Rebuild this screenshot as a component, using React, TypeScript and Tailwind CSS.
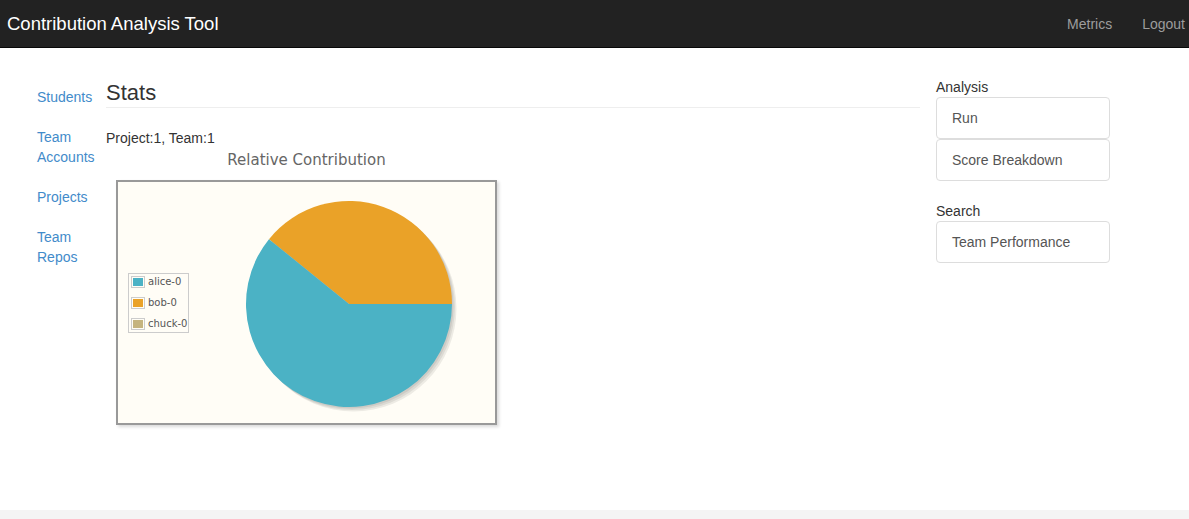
import React from 'react';

const sideLinks = [['Students'], ['Team', 'Accounts'], ['Projects'], ['Team', 'Repos']];

const legend = [
  { name: 'alice-0', color: '#4bb2c5' },
  { name: 'bob-0', color: '#eaa228' },
  { name: 'chuck-0', color: '#c5b47f' },
];

const PieChart: React.FC = () => {
  const cx = 231;
  const cy = 122;
  const r = 103;
  const end = (141 * Math.PI) / 180;
  const ex = cx + r * Math.cos(end);
  const ey = cy - r * Math.sin(end);

  return (
    <div className="relative ml-[10px] w-[381px] h-[245px] border-2 border-[#999] bg-[#fffdf6] shadow-[2px_2px_3px_rgba(0,0,0,0.15)]">
      <svg width="377" height="241" className="block">
        {/* shadow */}
        <circle cx={cx + 1.5} cy={cy + 1.5} r={r} fill="#000" opacity="0.07" />
        <circle cx={cx + 3} cy={cy + 3} r={r} fill="#000" opacity="0.07" />
        <circle cx={cx + 4.5} cy={cy + 4.5} r={r} fill="#000" opacity="0.07" />
        <path d={`M ${cx} ${cy} L ${cx + r} ${cy} A ${r} ${r} 0 0 0 ${ex} ${ey} Z`} fill="#eaa228" />
        <path d={`M ${cx} ${cy} L ${ex} ${ey} A ${r} ${r} 0 1 0 ${cx + r} ${cy} Z`} fill="#4bb2c5" />
      </svg>

      {/* Legend */}
      <div className="absolute left-[10px] top-[91px] flex flex-col gap-[5px] border border-[#ccc] bg-[#fffdf6] pl-[2px] pr-[1px] font-['DejaVu_Sans',sans-serif] text-[10px] leading-[12px] text-[#555] whitespace-nowrap">
        {legend.map((item) => (
          <div key={item.name} className="flex items-center h-[16px]">
            <div className="w-[14px] h-[12px] border border-[#ccc] p-[1px] mr-[3px]">
              <div className="w-full h-full" style={{ backgroundColor: item.color }} />
            </div>
            <span>{item.name}</span>
          </div>
        ))}
      </div>
    </div>
  );
};

export default function App() {
  return (
    <div className="h-[519px] flex flex-col bg-white font-['Liberation_Sans',Arial,sans-serif] text-[14px] leading-[20px] text-[#333]">
      {/* Navbar */}
      <div className="h-[48px] flex items-center justify-between bg-[#222] border-b border-[#080808]">
        <span className="pl-[7px] text-[18.5px] text-white">Contribution Analysis Tool</span>
        <div className="flex items-center text-[#9d9d9d] pr-[4px]">
          <a className="px-[15px]">Metrics</a>
          <a className="pl-[15px]">Logout</a>
        </div>
      </div>

      <div className="flex-1 flex pl-[37px] pt-[29px]">
        {/* Side nav */}
        <div className="w-[69px] flex flex-col gap-[20px] pt-[10px] text-[#428bca]">
          {sideLinks.map((lines) => (
            <a key={lines.join(' ')} className="block w-[62px]">
              {lines.map((l) => (
                <div key={l}>{l}</div>
              ))}
            </a>
          ))}
        </div>

        {/* Main */}
        <div className="w-[814px]">
          <h2 className="text-[22px] leading-[28px] pt-[2px] border-b border-[#eee]">Stats</h2>
          <div className="mt-[20px]">Project:1, Team:1</div>
          <div className="w-[381px] ml-[10px] mt-[2px] text-center font-['DejaVu_Sans',sans-serif] text-[15px] leading-[20px] text-[#666]">
            Relative Contribution
          </div>
          <div className="mt-[10px]">
            <PieChart />
          </div>
        </div>

        {/* Right column */}
        <div className="ml-[16px] w-[174px] text-[#333]">
          <div>Analysis</div>
          <div className="flex flex-col">
            {['Run', 'Score Breakdown'].map((t) => (
              <div key={t} className="h-[42px] flex items-center px-[15px] border border-[#ddd] rounded-[4px] text-[#555]">
                {t}
              </div>
            ))}
          </div>
          <div className="mt-[20px]">Search</div>
          <div className="h-[42px] flex items-center px-[15px] border border-[#ddd] rounded-[4px] text-[#555]">
            Team Performance
          </div>
        </div>
      </div>

      <div className="h-[9px] bg-[#f4f4f4]" />
    </div>
  );
}
